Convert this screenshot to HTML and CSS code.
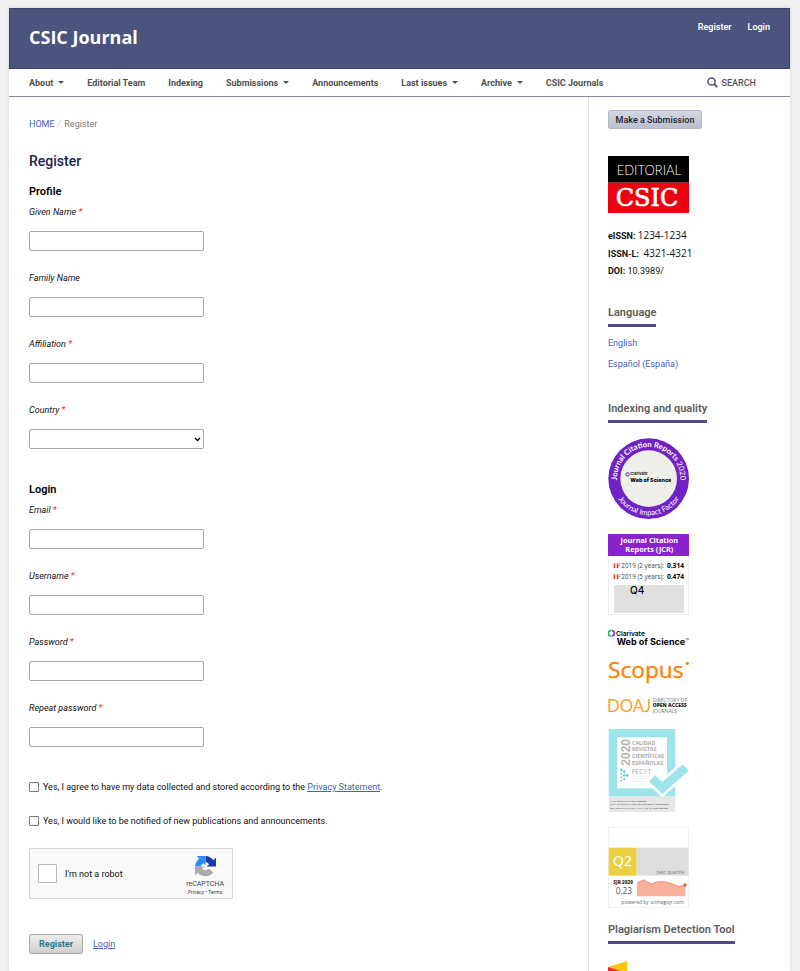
FILE: index.html
```html
<!DOCTYPE html>
<html lang="en">
<head>
  <meta charset="UTF-8">
  <meta name="viewport" content="width=device-width, initial-scale=1">
  <title>Register | CSIC Journal</title>
  <link rel="stylesheet" href="styles.css">
</head>
<body>
<div class="page">

  <header class="header">
    <a class="site-name" href="#">CSIC Journal</a>
    <nav class="user-nav">
      <a href="#">Register</a>
      <a href="#">Login</a>
    </nav>
  </header>

  <nav class="menu">
    <a href="#" class="drop">About</a>
    <a href="#">Editorial Team</a>
    <a href="#">Indexing</a>
    <a href="#" class="drop">Submissions</a>
    <a href="#">Announcements</a>
    <a href="#" class="drop">Last issues</a>
    <a href="#" class="drop">Archive</a>
    <a href="#">CSIC Journals</a>
    <a href="#" class="search">
      <svg width="11" height="11" viewBox="0 0 11 11"><circle cx="4.5" cy="4.5" r="3.6" fill="none" stroke="#54498f" stroke-width="1.5"/><path d="M7 7l3.2 3.2" stroke="#54498f" stroke-width="1.8"/></svg>
      SEARCH
    </a>
  </nav>

  <div class="content">
    <main class="main">
      <div class="breadcrumb"><a href="#">HOME</a><span class="sep">/</span><span>Register</span></div>
      <h1>Register</h1>

      <form>
        <h2>Profile</h2>
        <div class="field">
          <label for="given">Given Name <span class="req">*</span></label>
          <input type="text" id="given">
        </div>
        <div class="field">
          <label for="family">Family Name</label>
          <input type="text" id="family">
        </div>
        <div class="field">
          <label for="affiliation">Affiliation <span class="req">*</span></label>
          <input type="text" id="affiliation">
        </div>
        <div class="field">
          <label for="country">Country <span class="req">*</span></label>
          <div class="select-wrap">
            <select id="country"><option></option></select>
            <svg class="chevron" width="7" height="5" viewBox="0 0 7 5"><path d="M1 1l2.5 2.5L6 1" fill="none" stroke="#000" stroke-width="1.4"/></svg>
          </div>
        </div>

        <h2>Login</h2>
        <div class="field">
          <label for="email">Email <span class="req">*</span></label>
          <input type="email" id="email">
        </div>
        <div class="field">
          <label for="username">Username <span class="req">*</span></label>
          <input type="text" id="username">
        </div>
        <div class="field">
          <label for="password">Password <span class="req">*</span></label>
          <input type="password" id="password">
        </div>
        <div class="field">
          <label for="password2">Repeat password <span class="req">*</span></label>
          <input type="password" id="password2">
        </div>

        <div class="checks">
          <div class="check">
            <input type="checkbox" id="privacy">
            <label for="privacy">Yes, I agree to have my data collected and stored according to the <a href="#">Privacy Statement</a>.</label>
          </div>
          <div class="check">
            <input type="checkbox" id="notify">
            <label for="notify">Yes, I would like to be notified of new publications and announcements.</label>
          </div>
        </div>

        <div class="captcha">
          <input type="checkbox" id="robot">
          <label for="robot">I'm not a robot</label>
          <div class="captcha-brand">
            <svg width="21" height="21" viewBox="0 0 64 64">
              <path d="M64 32V5l-8 8A32 32 0 0 0 32 0v18a15 15 0 0 1 11 8l-8 6z" fill="#1c3aa9"/>
              <path d="M32 0H5l8 8A32 32 0 0 0 0 32h18a15 15 0 0 1 8-11l6 8z" fill="#2a8cf4"/>
              <path d="M0 32v27l8-8a32 32 0 0 0 48-1L43 39a15 15 0 0 1-22-1l8-6z" fill="#ababab"/>
            </svg>
            <span class="captcha-name">reCAPTCHA</span>
            <span class="captcha-links"><a href="#">Privacy</a> • <a href="#">Terms</a></span>
          </div>
        </div>

        <div class="actions">
          <button type="submit" class="btn-register">Register</button>
          <a href="#">Login</a>
        </div>
      </form>
    </main>

    <aside class="sidebar">
      <button type="button" class="btn-submit">Make a Submission</button>

      <svg class="editorial" width="81" height="57" viewBox="0 0 243 171">
        <rect width="243" height="80" fill="#000"/>
        <rect y="80" width="243" height="91" fill="#ee0011"/>
        <text x="26" y="58" font-family="Lato" font-weight="300" font-size="39" fill="#fff">EDITORIAL</text>
        <text x="23" y="150" font-family="DejaVu Serif" font-size="72" fill="#fff" stroke="#fff" stroke-width="2">CSIC</text>
      </svg>

      <div class="issn">
        <p><b>eISSN:</b> <span class="num">1234-1234</span></p>
        <p><b>ISSN-L:</b>&nbsp; <span class="num">4321-4321</span></p>
        <p><b>DOI:</b> 10.3989/</p>
      </div>

      <h3>Language</h3>
      <ul class="langs">
        <li><a href="#">English</a></li>
        <li><a href="#">Español (España)</a></li>
      </ul>

      <h3>Indexing and quality</h3>
      <div class="badges">
        <svg width="81" height="81" viewBox="0 0 243 243">
          <defs>
            <path id="arcTop" d="M27 122a95 95 0 0 1 190 0"/>
            <path id="arcBottom" d="M12 122a110 110 0 0 0 220 0"/>
          </defs>
          <circle cx="122" cy="122" r="121" fill="#7122c4"/>
          <circle cx="122" cy="122" r="85" fill="#efefea"/>
          <g font-family="Lato" font-size="23" fill="#fff" text-anchor="middle">
            <text font-weight="700"><textPath href="#arcTop" startOffset="50%">Journal Citation Reports <tspan font-weight="400">2020</tspan></textPath></text>
            <text><textPath href="#arcBottom" startOffset="50%">Journal Impact Factor</textPath></text>
          </g>
          <circle cx="59" cy="109" r="5" fill="none" stroke="#7d3bc4" stroke-width="3"/>
          <path d="M59 104a5 5 0 0 0 0 10" fill="none" stroke="#31a86a" stroke-width="3"/>
          <text x="67" y="112" font-family="Inter" font-weight="600" font-size="12">Clarivate</text>
          <text x="67" y="131" font-family="Inter" font-weight="800" font-size="16">Web of Science</text>
        </svg>

        <svg width="81" height="81" viewBox="0 0 243 243">
          <rect x="1" y="1" width="241" height="241" fill="#fff" stroke="#e8e8e8" stroke-width="2"/>
          <rect width="243" height="66" fill="#8b22cb"/>
          <g font-family="Noto Sans" font-weight="700" font-size="22" fill="#fff" text-anchor="middle">
            <text x="124" y="26">Journal Citation</text>
            <text x="124" y="55">Reports (JCR)</text>
          </g>
          <g font-family="DejaVu Serif" font-weight="700" font-size="19" fill="#d22">
            <text x="15" y="102">IF</text>
            <text x="15" y="134">IF</text>
          </g>
          <g font-family="Open Sans" font-size="19" fill="#444">
            <text x="40" y="102">2019 (2 years):</text>
            <text x="40" y="134">2019 (5 years):</text>
          </g>
          <g font-family="Open Sans" font-weight="700" font-size="20" text-anchor="end">
            <text x="228" y="102">0.314</text>
            <text x="228" y="134">0.474</text>
          </g>
          <rect x="18" y="153" width="210" height="84" fill="#e0e0e0"/>
          <text x="66" y="179" font-family="Inter" font-weight="500" font-size="30">Q4</text>
        </svg>

        <svg class="wos" width="81" height="21" viewBox="0 0 243 63">
          <path d="M11 5a8 8 0 0 1 0 16" fill="none" stroke="#8a3fd1" stroke-width="5"/>
          <path d="M9 5a8 8 0 0 0 0 16" fill="none" stroke="#29b273" stroke-width="5"/>
          <text x="24" y="20" font-family="Inter" font-weight="600" font-size="20">Clarivate</text>
          <text x="26" y="49" font-family="Inter" font-weight="700" font-size="27">Web of Science</text>
          <text x="232" y="34" font-family="Inter" font-size="7">TM</text>
        </svg>

        <svg class="scopus" width="81" height="33" viewBox="0 0 243 99">
          <text x="0" y="70" font-family="Open Sans" font-size="68" fill="#ff8200" stroke="#ff8200" stroke-width="1">Scopus</text>
          <circle cx="238" cy="25" r="5" fill="#ff8200"/>
        </svg>

        <svg class="doaj" width="81" height="22" viewBox="0 0 243 66">
          <text x="-3" y="51" font-family="Lato" font-weight="400" font-size="50" fill="#fba02c">DOAJ</text>
          <g font-family="Open Sans" font-size="15" fill="#777">
            <text x="134" y="20">DIRECTORY OF</text>
            <text x="134" y="37" font-weight="800" fill="#222">OPEN ACCESS</text>
            <text x="134" y="54">JOURNALS</text>
          </g>
        </svg>

        <svg class="fecyt" width="81" height="83" viewBox="0 0 243 249">
          <rect x="2" width="200" height="203" fill="#9ee5eb"/>
          <rect x="28" y="25" width="149" height="153" fill="#fff"/>
          <rect x="2" y="203" width="200" height="46" fill="#e6e6e6"/>
          <text transform="translate(66 110) rotate(-90)" font-family="Liberation Sans" font-weight="700" font-size="36" fill="#b4b4b4">2020</text>
          <g font-family="Open Sans" font-weight="700" font-size="16" fill="#aaa">
            <text x="72" y="47">CALIDAD</text>
            <text x="72" y="67">REVISTAS</text>
            <text x="72" y="87">CIENTÍFICAS</text>
            <text x="72" y="107">ESPAÑOLAS</text>
          </g>
          <text x="71" y="134" font-family="Open Sans" font-size="21" fill="#aaa">FECYT</text>
          <g fill="#64cfe4">
            <circle cx="40" cy="123" r="4"/><circle cx="40" cy="134" r="3"/><circle cx="40" cy="145" r="3"/><circle cx="40" cy="154" r="3"/>
            <circle cx="49" cy="128" r="4"/><circle cx="49" cy="139" r="4"/><circle cx="49" cy="150" r="3"/>
            <circle cx="58" cy="139" r="4"/>
          </g>
          <path d="M72 142h58M72 149h50M72 156h46" stroke="#e9e9e9" stroke-width="2"/>
          <path d="M123 157l18-18 22 20 61-53 18 19-79 70z" fill="#9ee5eb" stroke="#fff" stroke-width="16" paint-order="stroke"/>
          <g font-family="Liberation Sans" font-size="6" fill="#555">
            <text x="7" y="219">Nº DE CERTIFICADO: <tspan font-weight="700">FECYT-000/2020</tspan></text>
            <text x="7" y="229">FECHA DE CERTIFICACIÓN: <tspan font-weight="700">12 de julio 2019 (6ª convocatoria)</tspan></text>
            <text x="7" y="239">ESTA CERTIFICACIÓN ES VÁLIDA HASTA EL: <tspan font-weight="700">12 de julio 2021</tspan></text>
          </g>
        </svg>

        <svg width="81" height="81" viewBox="0 0 243 243">
          <rect x="1" y="1" width="241" height="241" fill="#fff" stroke="#ececec" stroke-width="2"/>
          <rect x="2" y="62" width="84" height="84" fill="#ecd044"/>
          <rect x="86" y="62" width="156" height="84" fill="#dedede"/>
          <text x="15" y="118" font-family="Open Sans" font-size="42" fill="#fff">Q2</text>
          <text x="228" y="141" font-family="Open Sans" font-size="14" fill="#777" text-anchor="end">best quartile</text>
          <text x="16" y="171" font-family="Open Sans" font-weight="800" font-size="14" fill="#333">SJR 2020</text>
          <text x="23" y="201" font-family="Open Sans" font-size="25" fill="#555">0.23</text>
          <path d="M87 168l20-10 22 13 20-7h20l20 5 22 9 21-4v34H87z" fill="#f8b09b"/>
          <path d="M87 168l20-10 22 13 20-7h20l20 5 22 9 21-4" fill="none" stroke="#ee7550" stroke-width="2"/>
          <circle cx="231" cy="174" r="5" fill="#f4582b"/>
          <text x="228" y="230" font-family="Open Sans" font-size="15" fill="#666" text-anchor="end">powered by scimagojr.com</text>
        </svg>
      </div>

      <h3>Plagiarism Detection Tool</h3>
      <svg class="tool" width="20" height="11" viewBox="0 0 60 33">
        <path d="M0 21L58 3v30H24z" fill="#ffc60b"/>
        <path d="M0 21l36 12H0z" fill="#ef2435"/>
      </svg>
    </aside>
  </div>

</div>
</body>
</html>
```

FILE: styles.css
```css
* { box-sizing: border-box; }
body {
  margin: 0;
  padding: 8px 10px 0 9px;
  background: #f1f1f1;
  font-family: Roboto, "Liberation Sans", sans-serif;
  font-size: 9px;
  line-height: 16px;
  color: #111;
}
a { color: #3a63c4; }
svg { display: block; }
h1, h2, h3, p, ul { margin: 0; padding: 0; }

.page {
  background: #fff;
  min-height: calc(100vh - 8px);
  box-shadow: 0 0 4px rgba(0, 0, 0, 0.12);
}

/* header */
.header {
  display: flex;
  justify-content: space-between;
  height: 61px;
  padding: 0 19px;
  background: #4a547e;
  border: 1px solid #3b4478;
}
.site-name {
  margin-top: 16px;
  font-family: "Open Sans", sans-serif;
  font-size: 18px;
  font-weight: 700;
  line-height: 24px;
  color: #fff;
  text-decoration: none;
}
.user-nav {
  display: flex;
  gap: 16px;
  padding-top: 10px;
}
.user-nav a {
  font-weight: 600;
  color: #fff;
  text-decoration: none;
}

/* menu */
.menu {
  display: flex;
  align-items: center;
  gap: 23px;
  height: 28px;
  padding: 0 34px 0 20px;
  border-bottom: 1px solid #8b82a5;
  white-space: nowrap;
}
.menu a {
  display: flex;
  align-items: center;
  font-weight: 700;
  color: #505050;
  text-decoration: none;
}
.drop::after {
  content: "";
  margin-left: 5px;
  border: 3px solid transparent;
  border-top-color: #505050;
  border-bottom: 0;
}
.menu .search {
  gap: 4px;
  margin-left: auto;
  font-weight: 500;
  color: #555;
}

.content {
  display: grid;
  grid-template-columns: 1fr 202px;
  min-height: calc(100vh - 97px);
}
.main { padding: 19px 20px 0; }
.sidebar {
  padding: 13px 0 0 19px;
  border-left: 1px solid #e4e4e4;
}

.breadcrumb { color: #777; }
.breadcrumb a { text-decoration: none; }
.sep { margin: 0 3px; color: #ccc; }
h1 {
  margin-top: 19px;
  font-size: 14px;
  font-weight: 500;
  line-height: 20px;
  color: #1c2450;
}
h2 {
  margin-top: 13px;
  font-size: 11px;
  font-weight: 600;
  line-height: 16px;
  color: #000;
}
.field + h2 { margin-top: 33px; }
h2 + .field { margin-top: 5px; }

/* form */
.field { margin-bottom: 20px; }
.field label {
  display: block;
  margin-bottom: 12px;
  font-style: italic;
  line-height: 14px;
}
.req { color: #f22; }
.field input, .field select {
  display: block;
  width: 175px;
  height: 20px;
  border: 1px solid #a8a8a8;
  border-radius: 2px;
  background: #fff;
}
.select-wrap { position: relative; width: 175px; }
.field select { appearance: none; }
.chevron { position: absolute; right: 3px; top: 8px; }

.checks {
  display: flex;
  flex-direction: column;
  gap: 18px;
  margin-top: 32px;
}
.check { display: flex; align-items: center; gap: 4px; }
.check input {
  appearance: none;
  width: 10px;
  height: 10px;
  margin: 0;
  border: 1px solid #77777f;
  border-radius: 1px;
}

.captcha {
  display: flex;
  align-items: center;
  width: 204px;
  height: 51px;
  margin-top: 19px;
  padding: 0 8px;
  border: 1px solid #d6d6d6;
  border-radius: 1px;
  background: #f9f9f9;
}
.captcha input {
  appearance: none;
  width: 19px;
  height: 19px;
  margin: 0 8px 0 0;
  border: 1px solid #b8b8b8;
  border-radius: 1px;
  background: #fff;
}
.captcha-brand {
  display: flex;
  flex-direction: column;
  align-items: center;
  margin-left: auto;
  padding-top: 4px;
  font-size: 5px;
  line-height: 8px;
  color: #444;
}
.captcha-brand a { color: #444; text-decoration: none; }
.captcha-name { margin-top: 3px; font-size: 7px; }

.actions {
  display: flex;
  align-items: center;
  gap: 10px;
  margin-top: 35px;
}
button {
  padding: 0;
  font-family: inherit;
  font-size: 9px;
  border-radius: 2px;
}
.btn-register {
  width: 54px;
  height: 20px;
  border: 1px solid #a9a9a9;
  background: linear-gradient(#ececec, #d0d0d0);
  font-weight: 700;
  color: #1f7a8c;
}

/* sidebar */
.btn-submit {
  display: block;
  width: 94px;
  height: 19px;
  border: 1px solid #b4b9c9;
  background: linear-gradient(#d3d7e2, #bbc0cf);
  font-weight: 500;
  color: #1c1f2c;
}
.editorial { margin-top: 27px; }
.issn {
  margin-top: 14px;
  line-height: 17px;
}
.issn .num {
  font-family: "Open Sans", sans-serif;
  font-size: 10px;
  line-height: 16px;
}
h3 {
  width: fit-content;
  padding-bottom: 3px;
  border-bottom: 3px solid #54498f;
  font-size: 11px;
  font-weight: 600;
  line-height: 16px;
  color: #5c5c5c;
}
.issn + h3 { margin-top: 25px; }
.langs { margin: 6px 0 26px; list-style: none; }
.langs li { line-height: 21px; }
.langs a { text-decoration: none; }

.badges {
  display: flex;
  flex-direction: column;
  gap: 15px;
  margin: 15px 0 14px;
}
.wos { margin-top: -1px; }
.scopus { margin-top: -10px; }
.doaj { margin-top: -8px; }
.fecyt { margin-top: -3px; }
.tool { margin-top: 16px; }
```
